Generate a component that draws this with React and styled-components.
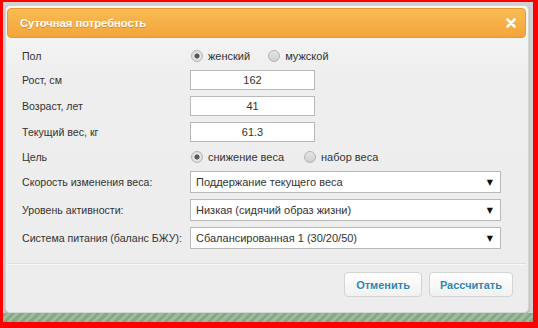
import React from "react";
import styled, { createGlobalStyle } from "styled-components";

const GlobalStyle = createGlobalStyle`
  html, body {
    margin: 0;
    padding: 0;
    background: #ffffff;
  }
`;

const Frame = styled.div`
  width: 538px;
  height: 328px;
  box-sizing: border-box;
  border-style: solid;
  border-color: #ff0000;
  border-width: 2px 5px 6px 3px;
  background: #d2d2d2;
  display: flex;
  flex-direction: column;
  font-family: "Liberation Sans", Arial, sans-serif;
  overflow: hidden;
`;

const Backdrop = styled.div`
  padding: 3px 4px 0 2px;
  display: flex;
`;

const Dialog = styled.div`
  width: 524px;
  height: 308px;
  box-sizing: border-box;
  border: 1px solid #d6d6d6;
  border-radius: 5px;
  padding: 2px 2px 0 1px;
  background: linear-gradient(#f8f8f8, #eeeeee 70px, #ededed);
  display: flex;
  flex-direction: column;
  box-shadow: 0 1px 2px rgba(0, 0, 0, 0.25);
`;

const Header = styled.div`
  height: 30px;
  box-sizing: border-box;
  border: 1px solid #e79b2f;
  border-radius: 4px;
  background: linear-gradient(#f9bb55, #f3a53a);
  display: flex;
  align-items: center;
  justify-content: space-between;
  padding: 0 9px 0 12px;
`;

const Title = styled.span`
  color: #ffffff;
  font-weight: bold;
  font-size: 11.2px;
  text-shadow: 0 1px 0 rgba(170, 100, 20, 0.45);
`;

const Close = styled.svg`
  display: block;
`;

const Form = styled.div`
  display: grid;
  grid-template-columns: 168px 1fr;
  row-gap: 6px;
  align-items: center;
  padding: 9px 15px 0 15px;
`;

const Label = styled.span`
  font-size: 10.6px;
  color: #333333;
  white-space: nowrap;
`;

const RadioGroup = styled.div`
  height: 17px;
  display: flex;
  align-items: center;
`;

const RadioOption = styled.label`
  display: flex;
  align-items: center;
  gap: 5px;
  margin-right: ${(p) => p.$gap || 20}px;
  margin-left: 1px;
  font-size: 11px;
  color: #333333;
`;

const RadioDot = styled.span`
  width: 12px;
  height: 12px;
  box-sizing: border-box;
  border-radius: 50%;
  border: 1px solid #b4b4b4;
  background: ${(p) =>
    p.$checked
      ? "radial-gradient(circle, #5a5a5a 0 2.3px, #e2e2e2 2.8px)"
      : "linear-gradient(#e6e6e6, #cfcfcf)"};
`;

const TextInput = styled.div`
  width: 125px;
  height: 20px;
  box-sizing: border-box;
  border: 1px solid #b9b9b9;
  background: #ffffff;
  display: flex;
  align-items: center;
  justify-content: center;
  font-size: 11px;
  color: #333333;
`;

const Select = styled.div`
  width: 311px;
  height: 22px;
  box-sizing: border-box;
  border: 1px solid #b9b9b9;
  background: #ffffff;
  display: flex;
  align-items: center;
  justify-content: space-between;
  padding: 0 7px 0 5px;
  font-size: 11px;
  color: #333333;
`;

const Arrow = styled.span`
  font-size: 8px;
  color: #111111;
  font-family: "DejaVu Sans", sans-serif;
`;

const Footer = styled.div`
  margin-top: 14px;
  border-top: 1px solid #dedede;
  box-shadow: inset 0 1px 0 #f8f8f8;
  display: flex;
  justify-content: flex-end;
  gap: 7px;
  padding: 8px 13px 0 0;
`;

const Button = styled.button`
  height: 25px;
  box-sizing: border-box;
  padding: 0 ${(p) => p.$pad || 10}px;
  border: 1px solid #d4d4d4;
  border-radius: 4px;
  background: linear-gradient(#ffffff, #f1f1f1);
  color: #2c86b5;
  font-family: "Liberation Sans", Arial, sans-serif;
  font-weight: bold;
  font-size: 11px;
  text-shadow: 0 1px 0 #ffffff;
  cursor: pointer;
`;

const GreenStrip = styled.div`
  flex: 1;
  background: repeating-linear-gradient(
    135deg,
    #85a886 0 3px,
    #9dbb9d 3px 6px
  );
`;

const fields = [
  { label: "Рост, см", value: "162" },
  { label: "Возраст, лет", value: "41" },
  { label: "Текущий вес, кг", value: "61.3" },
];

const selects = [
  { label: "Скорость изменения веса:", value: "Поддержание текущего веса" },
  { label: "Уровень активности:", value: "Низкая (сидячий образ жизни)" },
  { label: "Система питания (баланс БЖУ):", value: "Сбалансированная 1 (30/20/50)" },
];

export default function App() {
  return (
    <>
      <GlobalStyle />
      <Frame>
        <Backdrop>
          <Dialog>
            <Header>
              <Title>Суточная потребность</Title>
              <Close width="10" height="10" viewBox="0 0 10 10">
                <path
                  d="M1.5 1.5 L8.5 8.5 M8.5 1.5 L1.5 8.5"
                  stroke="#ffffff"
                  strokeWidth="2.6"
                  strokeLinecap="round"
                />
              </Close>
            </Header>

            <Form>
              <Label>Пол</Label>
              <RadioGroup>
                <RadioOption $gap={17}>
                  <RadioDot $checked />
                  женский
                </RadioOption>
                <RadioOption>
                  <RadioDot />
                  мужской
                </RadioOption>
              </RadioGroup>

              {fields.map((f) => (
                <React.Fragment key={f.label}>
                  <Label>{f.label}</Label>
                  <TextInput>{f.value}</TextInput>
                </React.Fragment>
              ))}

              <Label>Цель</Label>
              <RadioGroup>
                <RadioOption $gap={19}>
                  <RadioDot $checked />
                  снижение веса
                </RadioOption>
                <RadioOption>
                  <RadioDot />
                  набор веса
                </RadioOption>
              </RadioGroup>

              {selects.map((s) => (
                <React.Fragment key={s.label}>
                  <Label>{s.label}</Label>
                  <Select>
                    <span>{s.value}</span>
                    <Arrow>▼</Arrow>
                  </Select>
                </React.Fragment>
              ))}
            </Form>

            <Footer>
              <Button $pad={11}>Отменить</Button>
              <Button $pad={10}>Рассчитать</Button>
            </Footer>
          </Dialog>
        </Backdrop>
        <GreenStrip />
      </Frame>
    </>
  );
}
